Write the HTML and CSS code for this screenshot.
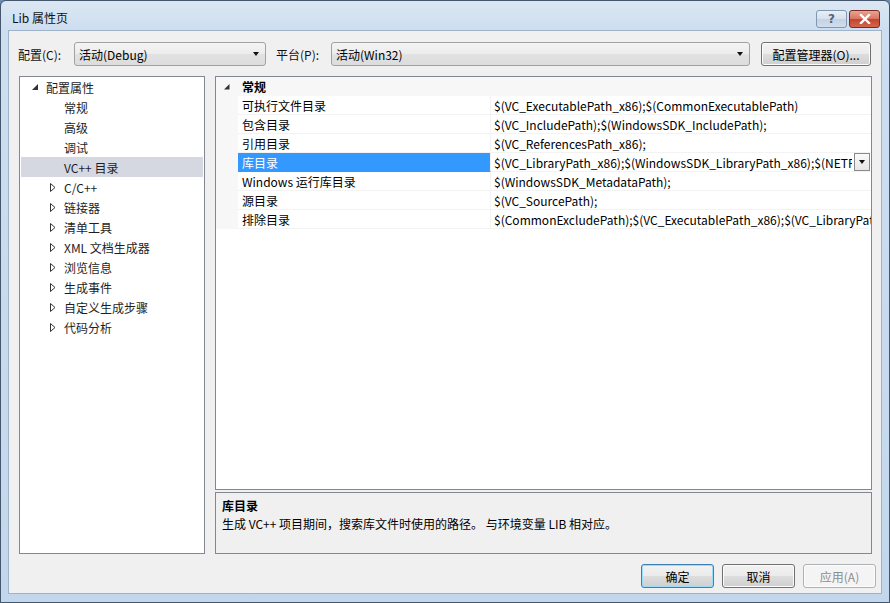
FILE: index.html
```html
<!DOCTYPE html>
<html lang="zh-CN">
<head>
<meta charset="utf-8">
<title>Lib 属性页</title>
<link rel="stylesheet" href="styles.css">
</head>
<body>
<div class="window">
  <div class="titlebar">
    <span class="title">Lib 属性页</span>
    <div class="caption-btns">
      <div class="cbtn help">?</div>
      <div class="cbtn close">
        <svg width="12" height="10" viewBox="0 0 12 10"><path d="M2 1 L10 9 M10 1 L2 9" stroke="#fff" stroke-width="2.4" stroke-linecap="square" fill="none"/></svg>
      </div>
    </div>
  </div>
  <div class="client">
    <div class="toolbar">
      <span class="lbl lbl-config">配置(C):</span>
      <div class="combo combo-config"><span>活动(Debug)</span><span class="arrow"></span></div>
      <span class="lbl lbl-platform">平台(P):</span>
      <div class="combo combo-platform"><span>活动(Win32)</span><span class="arrow"></span></div>
      <div class="btn btn-manager">配置管理器(O)...</div>
    </div>
    <div class="main">
      <div class="tree">
        <div class="trow lvl0"><span class="exp"><svg width="7" height="7" viewBox="0 0 7 7"><path d="M6 0 L6 6 L0 6 Z" fill="#333"/></svg></span>配置属性</div>
        <div class="trow lvl1 leaf">常规</div>
        <div class="trow lvl1 leaf">高级</div>
        <div class="trow lvl1 leaf">调试</div>
        <div class="trow lvl1 leaf sel">VC++ 目录</div>
        <div class="trow lvl1"><span class="col"><svg width="6" height="9" viewBox="0 0 6 9"><path d="M0.5 0.5 L5 4.5 L0.5 8.5 Z" fill="none" stroke="#333"/></svg></span>C/C++</div>
        <div class="trow lvl1"><span class="col"><svg width="6" height="9" viewBox="0 0 6 9"><path d="M0.5 0.5 L5 4.5 L0.5 8.5 Z" fill="none" stroke="#333"/></svg></span>链接器</div>
        <div class="trow lvl1"><span class="col"><svg width="6" height="9" viewBox="0 0 6 9"><path d="M0.5 0.5 L5 4.5 L0.5 8.5 Z" fill="none" stroke="#333"/></svg></span>清单工具</div>
        <div class="trow lvl1"><span class="col"><svg width="6" height="9" viewBox="0 0 6 9"><path d="M0.5 0.5 L5 4.5 L0.5 8.5 Z" fill="none" stroke="#333"/></svg></span>XML 文档生成器</div>
        <div class="trow lvl1"><span class="col"><svg width="6" height="9" viewBox="0 0 6 9"><path d="M0.5 0.5 L5 4.5 L0.5 8.5 Z" fill="none" stroke="#333"/></svg></span>浏览信息</div>
        <div class="trow lvl1"><span class="col"><svg width="6" height="9" viewBox="0 0 6 9"><path d="M0.5 0.5 L5 4.5 L0.5 8.5 Z" fill="none" stroke="#333"/></svg></span>生成事件</div>
        <div class="trow lvl1"><span class="col"><svg width="6" height="9" viewBox="0 0 6 9"><path d="M0.5 0.5 L5 4.5 L0.5 8.5 Z" fill="none" stroke="#333"/></svg></span>自定义生成步骤</div>
        <div class="trow lvl1"><span class="col"><svg width="6" height="9" viewBox="0 0 6 9"><path d="M0.5 0.5 L5 4.5 L0.5 8.5 Z" fill="none" stroke="#333"/></svg></span>代码分析</div>
      </div>
      <div class="right">
        <div class="grid">
          <div class="grow header">
            <span class="gutter"><svg width="6" height="6" viewBox="0 0 6 6"><path d="M5.5 0 L5.5 5.5 L0 5.5 Z" fill="#333"/></svg></span>
            <span class="gname">常规</span>
          </div>
          <div class="grow"><span class="gutter"></span><span class="gname">可执行文件目录</span><span class="gval">$(VC_ExecutablePath_x86);$(CommonExecutablePath)</span></div>
          <div class="grow"><span class="gutter"></span><span class="gname">包含目录</span><span class="gval">$(VC_IncludePath);$(WindowsSDK_IncludePath);</span></div>
          <div class="grow"><span class="gutter"></span><span class="gname">引用目录</span><span class="gval">$(VC_ReferencesPath_x86);</span></div>
          <div class="grow selrow"><span class="gutter"></span><span class="gname">库目录</span><span class="gval"><span class="vtext">$(VC_LibraryPath_x86);$(WindowsSDK_LibraryPath_x86);$(NETFXKitsDir)Lib\um\x86</span><span class="vdrop"></span></span></div>
          <div class="grow"><span class="gutter"></span><span class="gname">Windows 运行库目录</span><span class="gval">$(WindowsSDK_MetadataPath);</span></div>
          <div class="grow"><span class="gutter"></span><span class="gname">源目录</span><span class="gval">$(VC_SourcePath);</span></div>
          <div class="grow"><span class="gutter"></span><span class="gname">排除目录</span><span class="gval">$(CommonExcludePath);$(VC_ExecutablePath_x86);$(VC_LibraryPath_x86)</span></div>
        </div>
        <div class="desc">
          <div class="dtitle">库目录</div>
          <div class="dtext">生成 VC++ 项目期间，搜索库文件时使用的路径。 与环境变量 LIB 相对应。</div>
        </div>
      </div>
    </div>
    <div class="footer">
      <div class="btn fbtn default">确定</div>
      <div class="btn fbtn">取消</div>
      <div class="btn fbtn disabled">应用(A)</div>
    </div>
  </div>
</div>
</body>
</html>
```
FILE: styles.css
```css
* { box-sizing: border-box; }
html, body { margin: 0; padding: 0; }
body {
  width: 890px;
  height: 603px;
  overflow: hidden;
  font-family: "Noto Sans CJK SC", sans-serif;
  font-size: 12px;
  color: #000;
  background: #6b8bb0;
}
.window {
  width: 890px;
  height: 603px;
  border: 1px solid #44576c;
  border-radius: 6px 6px 0 0;
  background: linear-gradient(to bottom, #dbe7f3 0px, #cddef0 30px, #c3d7ec 100%);
  padding: 0 7px 8px 7px;
  display: flex;
  flex-direction: column;
}
.titlebar {
  height: 29px;
  display: flex;
  align-items: flex-start;
  justify-content: space-between;
  flex: none;
}
.title {
  padding: 9px 0 0 4px;
  font-size: 12px;
  line-height: 16px;
  color: #111;
}
.caption-btns {
  display: flex;
  gap: 2px;
  padding-top: 9px;
  margin-right: 2px;
}
.cbtn {
  height: 18px;
  display: flex;
  align-items: center;
  justify-content: center;
  border-radius: 3px;
}
.help {
  width: 31px;
  border: 1px solid #8197b0;
  background: linear-gradient(to bottom, #e9eff6 0%, #d6e1ed 50%, #c3d3e4 51%, #d0dded 100%);
  color: #51657d;
  font-family: "DejaVu Sans", sans-serif;
  font-weight: bold;
  font-size: 12px;
  line-height: 16px;
}
.close {
  width: 31px;
  border: 1px solid #7b2a22;
  background: linear-gradient(to bottom, #e8a493 0%, #d9735f 50%, #c5432e 51%, #d2674a 100%);
}
.client {
  flex: 1;
  border: 1px solid #9fb3c8;
  background: #f0f0f0;
  display: flex;
  flex-direction: column;
}
.toolbar {
  display: flex;
  align-items: center;
  height: 24px;
  margin-top: 11px;
  padding-left: 9px;
}
.lbl { color: #111; }
.lbl-config { width: 56px; }
.lbl-platform { width: 55px; margin-left: 10px; }
.combo {
  height: 24px;
  border: 1px solid #a2a2a2;
  border-radius: 3px;
  background: linear-gradient(to bottom, #f4f4f4 0%, #ececec 50%, #e2e2e2 51%, #dcdcdc 100%);
  display: flex;
  align-items: center;
  justify-content: space-between;
  padding: 0 6px 0 4px;
}
.combo-config { width: 192px; }
.combo-platform { width: 419px; }
.arrow {
  width: 0; height: 0;
  border-left: 3.5px solid transparent;
  border-right: 3.5px solid transparent;
  border-top: 4px solid #111;
}
.btn {
  height: 24px;
  border: 1px solid #707070;
  border-radius: 3px;
  background: linear-gradient(to bottom, #f2f2f2 0%, #ebebeb 50%, #dddddd 51%, #cfcfcf 100%);
  display: flex;
  align-items: center;
  justify-content: center;
  box-shadow: inset 0 0 0 1px #fcfcfc;
}
.btn-manager { width: 110px; margin-left: 11px; }
.main {
  display: flex;
  margin-top: 10px;
  height: 478px;
  padding-left: 10px;
  gap: 10px;
}
.tree {
  width: 186px;
  background: #fff;
  border: 1px solid #828790;
  padding: 0 1px;
}
.trow {
  height: 20px;
  display: flex;
  align-items: center;
  color: #1e1e1e;
  white-space: nowrap;
}
.trow.lvl0 { padding-left: 11px; }
.trow.lvl1 { padding-left: 29px; }
.trow.leaf { padding-left: 43px; }
.exp { width: 14px; display: flex; align-items: center; }
.col { width: 14px; display: flex; align-items: center; }
.trow.sel { background: #d5d8e0; }
.right {
  width: 657px;
  display: flex;
  flex-direction: column;
  gap: 2px;
}
.grid {
  height: 415px;
  border: 1px solid #828790;
  background: #fff;
  display: flex;
  flex-direction: column;
  overflow: hidden;
}
.grow {
  height: 19px;
  display: flex;
  align-items: stretch;
  flex: none;
  white-space: nowrap;
}
.gutter {
  width: 22px;
  flex: none;
  background: #f7f7f7;
  display: flex;
  align-items: center;
  justify-content: center;
}
.gname {
  width: 253px;
  flex: none;
  padding-left: 4px;
  display: flex;
  align-items: center;
  border-bottom: 1px solid #f3f3f3;
  border-right: 1px solid #f3f3f3;
}
.gval {
  flex: 1;
  min-width: 0;
  padding-left: 3px;
  display: flex;
  align-items: center;
  overflow: hidden;
  border-bottom: 1px solid #f3f3f3;
  position: relative;
}
.header .gname {
  font-weight: bold;
  background: #f7f7f7;
  border: none;
}
.header { background: #f7f7f7; }
.selrow .gname { background: #3399ff; color: #fff; border-bottom-color: #3399ff; }
.vtext { overflow: hidden; white-space: nowrap; width: 358px; flex: none; }
.vdrop {
  position: absolute;
  right: 1px;
  top: 0;
  width: 16px;
  height: 18px;
  border: 1px solid #8a8a8a;
  background: linear-gradient(to bottom, #fafafa, #e6e6e6);
}
.vdrop::after {
  content: "";
  position: absolute;
  left: 4px;
  top: 6px;
  border-left: 3.5px solid transparent;
  border-right: 3.5px solid transparent;
  border-top: 4px solid #111;
}
.desc {
  height: 62px;
  border: 1px solid #828790;
  background: #f0f0f0;
  padding: 4px 6px;
  line-height: 18px;
}
.dtitle { font-weight: bold; }
.footer {
  display: flex;
  justify-content: flex-end;
  gap: 8px;
  margin-top: 10px;
  padding-right: 5px;
}
.fbtn { width: 73px; }
.default {
  border-color: #3c7fb1;
  box-shadow: inset 0 0 0 1px #9ddcf8;
}
.disabled {
  color: #8d8d8d;
  border-color: #adb2b5;
  background: #f4f4f4;
}
```
